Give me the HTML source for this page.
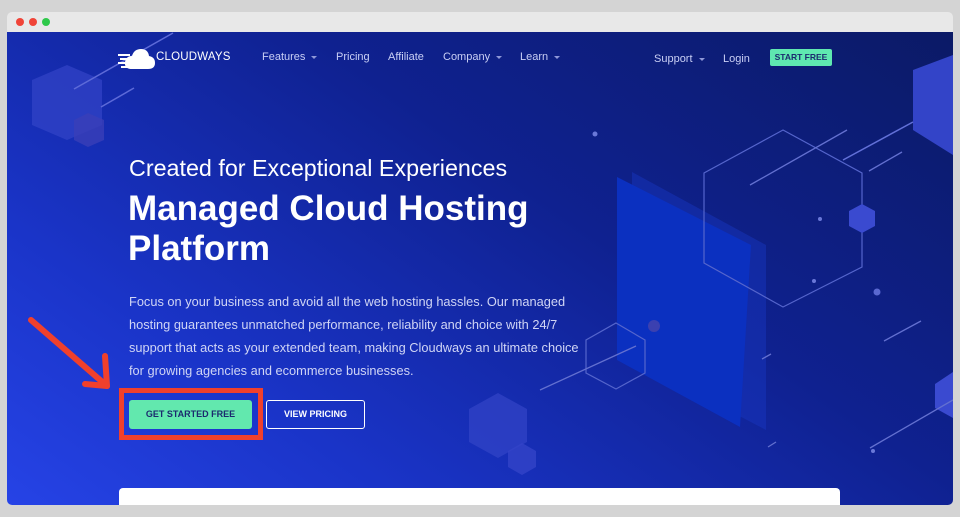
<!DOCTYPE html>
<html><head><meta charset="utf-8"><style>
*{margin:0;padding:0;box-sizing:border-box}
body{width:960px;height:517px;background:#d4d4d4;position:relative;overflow:hidden;font-family:"Liberation Sans",sans-serif}
.win{position:absolute;left:7px;top:12px;width:946px;height:493px;border-radius:5px;overflow:hidden;background:#e8e8e8}
.dot{position:absolute;top:6px;width:8px;height:8px;border-radius:50%}
.hero{position:absolute;left:0;top:20px;width:946px;height:473px;background:linear-gradient(215deg,#0b1a66 0%,#0f2190 40%,#1a34c8 75%,#2643e6 100%)}
.t{position:absolute;color:#fff;white-space:nowrap}
.nav{font-size:11px;color:#c9cff5}
.car{display:inline-block;width:0;height:0;border-left:3px solid transparent;border-right:3px solid transparent;border-top:3px solid #8f98d8;margin-left:6px;vertical-align:middle}
</style></head><body>
<div class="win">
<div class="dot" style="left:9px;background:#f04438"></div>
<div class="dot" style="left:22px;background:#f04438"></div>
<div class="dot" style="left:35px;background:#2ec84a"></div>
<div class="hero">
<svg width="946" height="473" style="position:absolute;left:0;top:0">
<g transform="translate(-7,-32)">
<polygon points="67,65 102,80 102,125 67,140 32,125 32,80" fill="#3344c8" opacity=".7"/>
<polygon points="88,113 104,120 104,140 88,147 74,140 74,120" fill="#3a3fb8" opacity=".8"/>
<line x1="74" y1="89" x2="173" y2="33" stroke="#5d6ad8" stroke-width="1.5"/>
<line x1="101" y1="107" x2="134" y2="88" stroke="#5d6ad8" stroke-width="1.5"/>
<polygon points="913,70 953,55 953,155 913,130" fill="#3344c8"/>
<line x1="843" y1="160" x2="913" y2="122" stroke="#6270d8" stroke-width="1.5"/>
<polygon points="632,172 766,245 766,430 632,360" fill="#1838c4" opacity=".45"/>
<polygon points="617,177 751,245 740,427 617,360" fill="#0b30c0"/>
<polygon points="783,130 862,173 862,267 783,307 704,263 704,173" fill="none" stroke="#5565cc" stroke-width="1.2"/>
<line x1="750" y1="185" x2="847" y2="130" stroke="#6370d0" stroke-width="1.3"/>
<line x1="869" y1="171" x2="902" y2="152" stroke="#6370d0" stroke-width="1.3"/>
<polygon points="862,204 875,211 875,226 862,233 849,226 849,211" fill="#3a4ad0"/>
<circle cx="820" cy="219" r="2" fill="#6a78d8"/><circle cx="814" cy="281" r="2" fill="#6a78d8"/>
<circle cx="877" cy="292" r="3.5" fill="#5a68d0"/><circle cx="595" cy="134" r="2.5" fill="#6a78d8"/>
<polygon points="616,323 645,340 645,373 616,389 586,373 586,340" fill="none" stroke="#5565cc" stroke-width="1.2"/>
<line x1="540" y1="390" x2="636" y2="346" stroke="#6370d0" stroke-width="1.3"/>
<circle cx="654" cy="326" r="6" fill="#3b40b0"/>
<line x1="884" y1="341" x2="921" y2="321" stroke="#6370d0" stroke-width="1.3"/>
<line x1="762" y1="359" x2="771" y2="354" stroke="#6370d0" stroke-width="1.3"/>
<line x1="768" y1="447" x2="776" y2="442" stroke="#6370d0" stroke-width="1.3"/>
<polygon points="953,372 953,418 935,408 935,384" fill="#3a4ad0"/>
<line x1="870" y1="448" x2="953" y2="400" stroke="#6370d0" stroke-width="1.3"/>
<circle cx="873" cy="451" r="2" fill="#6a78d8"/>
<polygon points="498,393 527,409 527,442 498,458 469,442 469,409" fill="#3344c8" opacity=".7"/>
<polygon points="522,443 536,451 536,467 522,475 508,467 508,451" fill="#3344c8" opacity=".8"/>
</g>
</svg>
<svg width="40" height="22" style="position:absolute;left:111px;top:16px" viewBox="0 0 40 22"><g fill="#fff"><path d="M14 21 Q6 21 7 14 Q8 8 14 8 Q16 1 23 1 Q30 1 31 8 Q37 9 37 15 Q37 21 30 21Z"/><rect x="0" y="6" width="12" height="2"/><rect x="2" y="10" width="10" height="2"/><rect x="0" y="14" width="12" height="2"/><rect x="3" y="18" width="9" height="2"/></g></svg>
<div class="t" style="left:149px;top:19px;font-size:11.5px;letter-spacing:.2px">CLOUDWAYS</div>
<div class="t nav" style="left:255px;top:19px">Features<span class="car"></span></div>
<div class="t nav" style="left:329px;top:19px">Pricing</div>
<div class="t nav" style="left:381px;top:19px">Affiliate</div>
<div class="t nav" style="left:436px;top:19px">Company<span class="car"></span></div>
<div class="t nav" style="left:513px;top:19px">Learn<span class="car"></span></div>
<div class="t nav" style="left:647px;top:21px">Support<span class="car"></span></div>
<div class="t nav" style="left:716px;top:21px">Login</div>
<div style="position:absolute;left:763px;top:17px;width:62px;height:17px;background:#5fe8b0;border-radius:2px;color:#1b2a6e;font-size:8.5px;font-weight:bold;text-align:center;line-height:17px">START FREE</div>
<div class="t" style="left:122px;top:123px;font-size:23.3px">Created for Exceptional Experiences</div>
<div class="t" style="left:121px;top:157px;font-size:35px;font-weight:bold;line-height:40px">Managed Cloud Hosting<br>Platform</div>
<div class="t" style="left:122px;top:258px;font-size:12.8px;line-height:23px;color:#d0d5f5">Focus on your business and avoid all the web hosting hassles. Our managed<br>hosting guarantees unmatched performance, reliability and choice with 24/7<br>support that acts as your extended team, making Cloudways an ultimate choice<br>for growing agencies and ecommerce businesses.</div>
<div style="position:absolute;left:112px;top:356px;width:144px;height:52px;border:5px solid #f0402c"></div>
<div style="position:absolute;left:122px;top:368px;width:123px;height:29px;background:#62e8ae;border-radius:3px;color:#1b2a6e;font-size:9px;font-weight:bold;text-align:center;line-height:29px">GET STARTED FREE</div>
<div style="position:absolute;left:259px;top:368px;width:99px;height:29px;border:1.5px solid #fff;border-radius:3px;color:#fff;font-size:9px;font-weight:bold;text-align:center;line-height:26px">VIEW PRICING</div>
<svg width="90" height="80" style="position:absolute;left:18px;top:282px"><g stroke="#f0402c" stroke-width="6" stroke-linecap="round" fill="none"><line x1="6" y1="6" x2="82" y2="72"/><line x1="82" y1="72" x2="80" y2="42"/><line x1="82" y1="72" x2="60" y2="70"/></g></svg>
<div style="position:absolute;left:112px;top:456px;width:721px;height:30px;background:#fff;border-radius:4px"></div>
</div>
</div>
</body></html>
